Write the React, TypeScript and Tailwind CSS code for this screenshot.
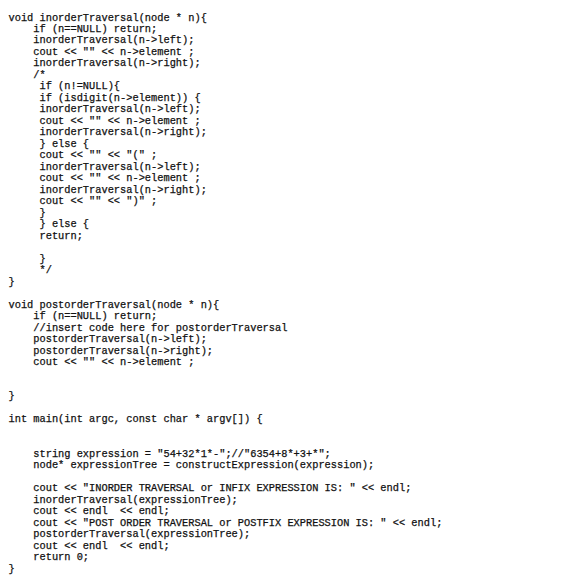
const code = `void inorderTraversal(node * n){
    if (n==NULL) return;
    inorderTraversal(n->left);
    cout << "" << n->element ;
    inorderTraversal(n->right);
    /*
     if (n!=NULL){
     if (isdigit(n->element)) {
     inorderTraversal(n->left);
     cout << "" << n->element ;
     inorderTraversal(n->right);
     } else {
     cout << "" << "(" ;
     inorderTraversal(n->left);
     cout << "" << n->element ;
     inorderTraversal(n->right);
     cout << "" << ")" ;
     }
     } else {
     return;

     }
     */
}

void postorderTraversal(node * n){
    if (n==NULL) return;
    //insert code here for postorderTraversal
    postorderTraversal(n->left);
    postorderTraversal(n->right);
    cout << "" << n->element ;


}

int main(int argc, const char * argv[]) {


    string expression = "54+32*1*-";//"6354+8*+3+*";
    node* expressionTree = constructExpression(expression);

    cout << "INORDER TRAVERSAL or INFIX EXPRESSION IS: " << endl;
    inorderTraversal(expressionTree);
    cout << endl  << endl;
    cout << "POST ORDER TRAVERSAL or POSTFIX EXPRESSION IS: " << endl;
    postorderTraversal(expressionTree);
    cout << endl  << endl;
    return 0;
}`;

const App = () => {
  return (
    <div className="w-[574px] h-[587px] bg-white overflow-hidden">
      <pre className="pl-[8.5px] pt-[12.5px] m-0 whitespace-pre font-['Liberation_Mono',monospace] text-[10.33px] leading-[11.48px] text-[#111] [-webkit-text-stroke:0.25px_#111]">
        {code}
      </pre>
    </div>
  );
};

export default App;
